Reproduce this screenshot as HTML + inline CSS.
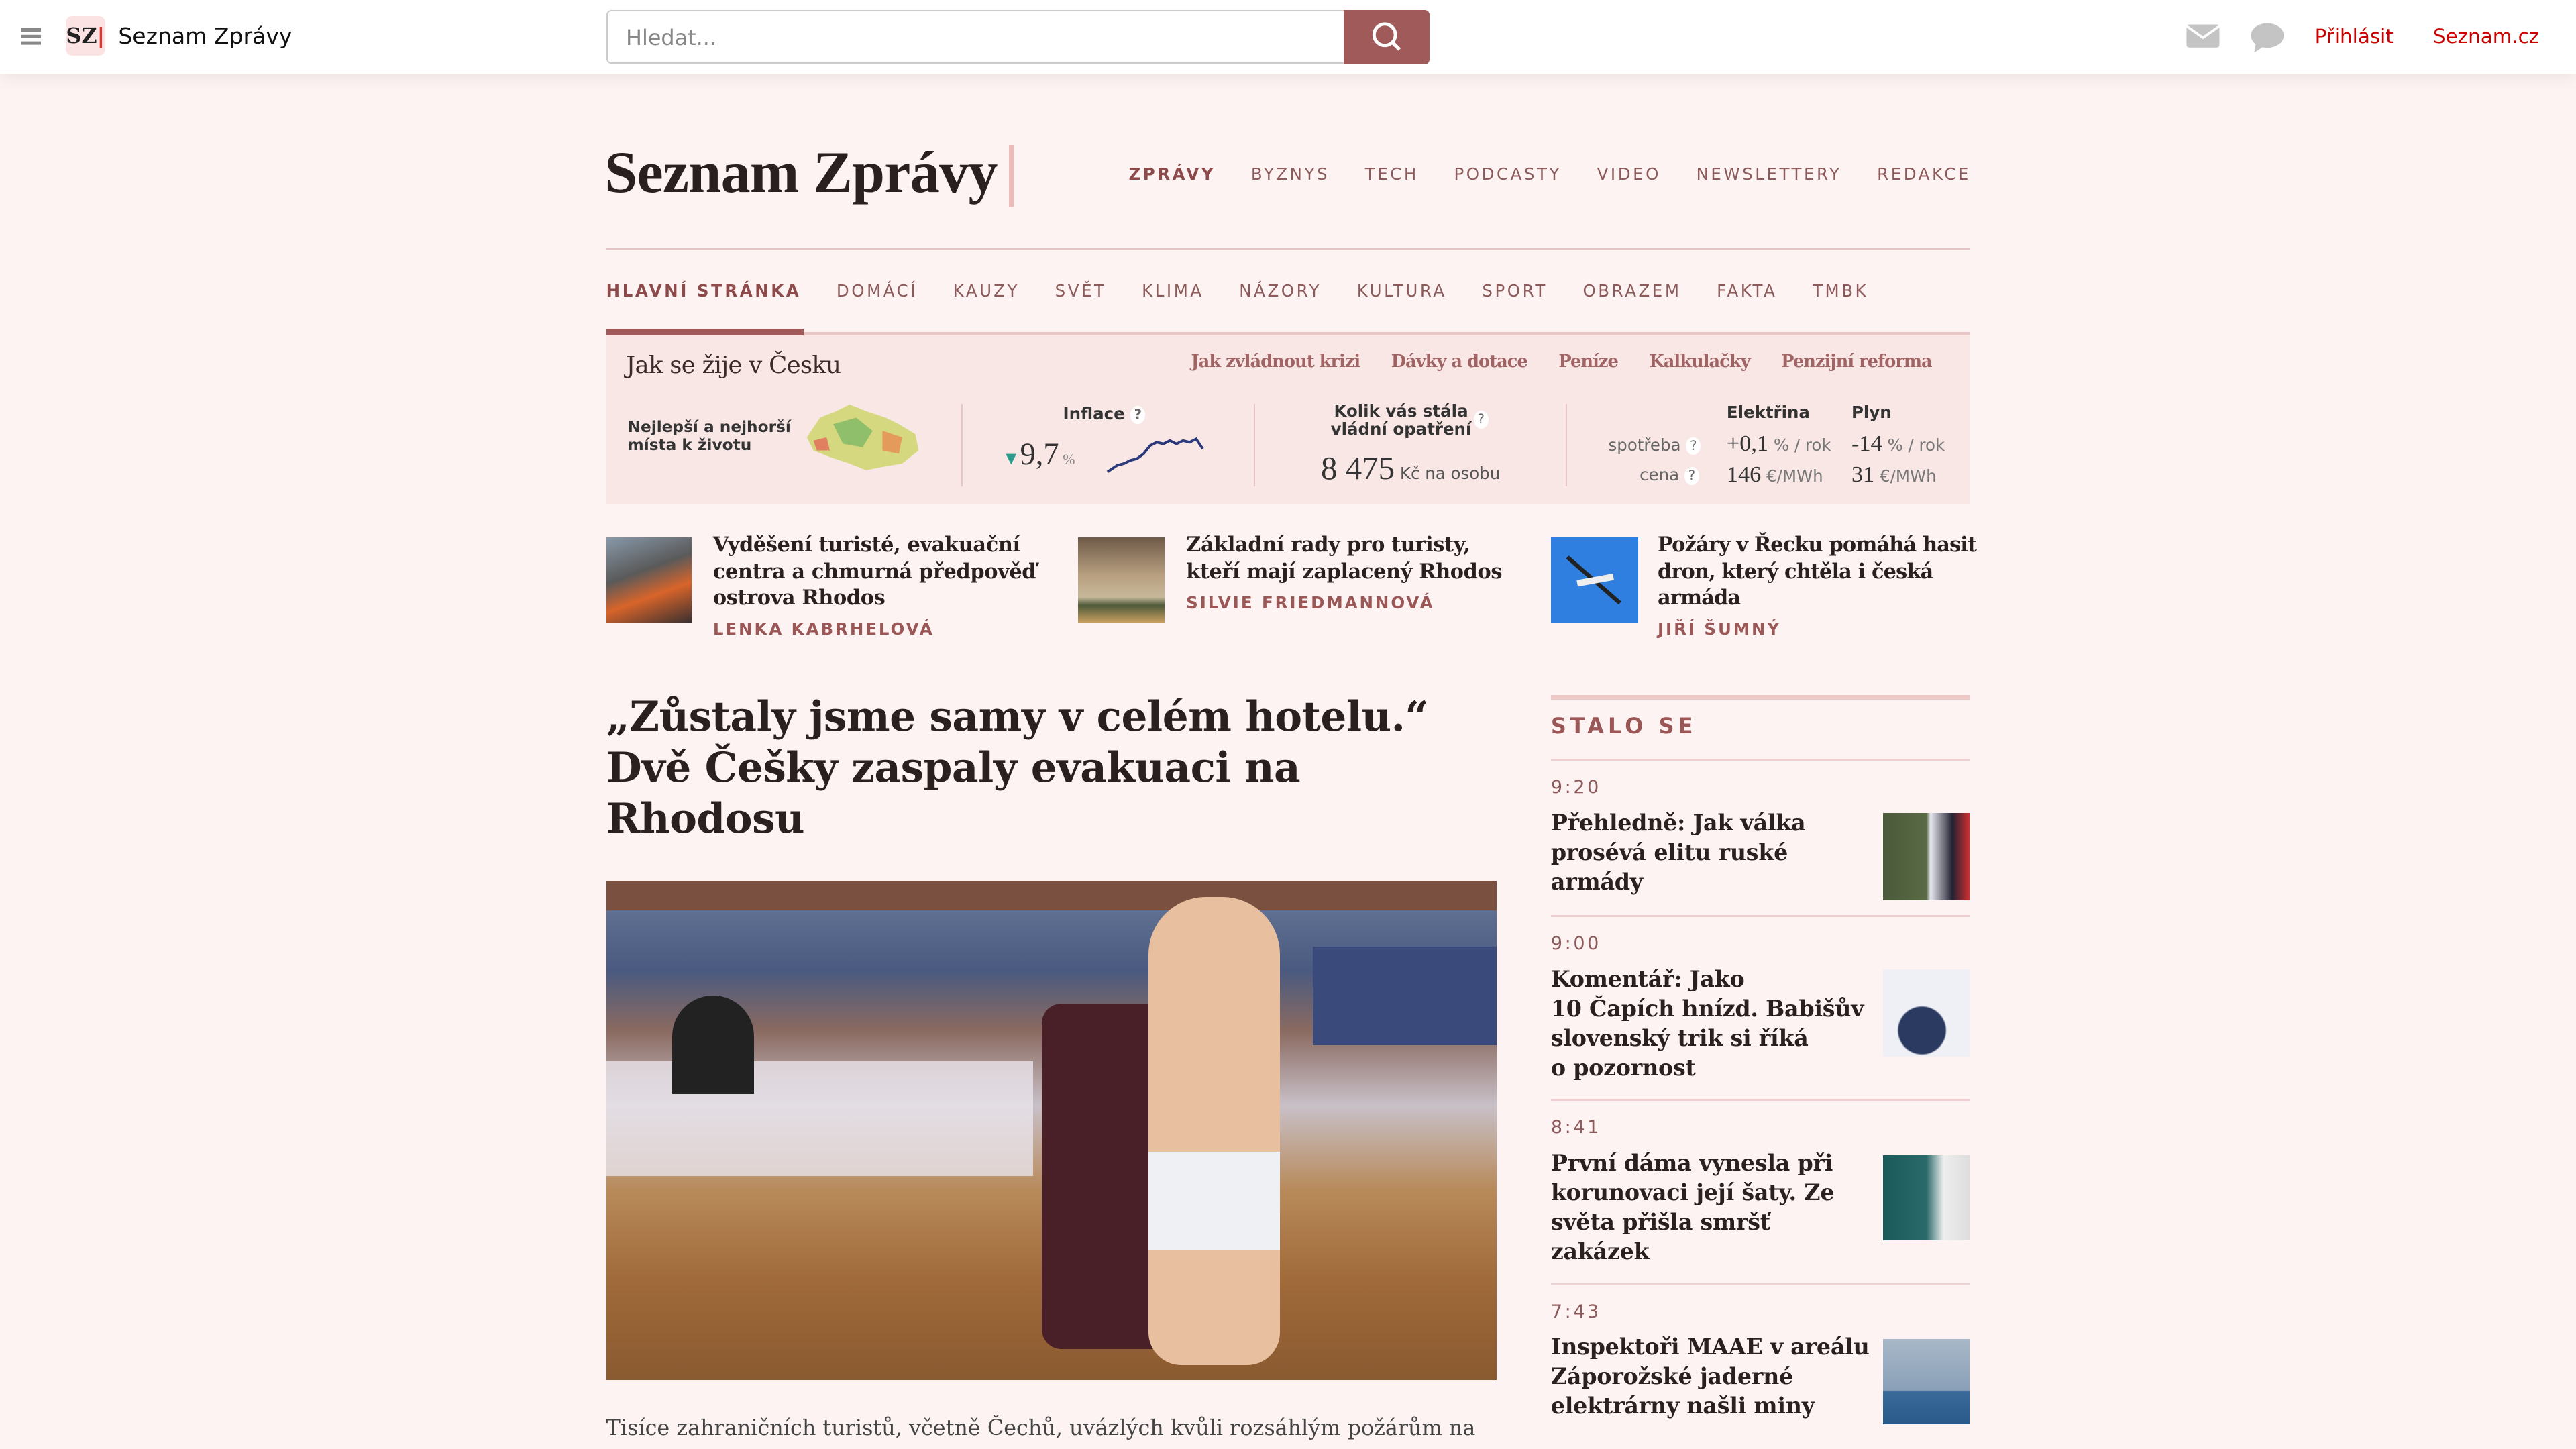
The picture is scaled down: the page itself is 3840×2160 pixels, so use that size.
<!DOCTYPE html>
<html><head><meta charset="utf-8"><style>
html,body{margin:0;padding:0;}
body{width:3840px;height:2160px;overflow:hidden;background:#fdf3f2;}
#p{zoom:2.44898;width:1568px;height:882px;position:relative;font-family:"DejaVu Sans",sans-serif;color:#2b2020;}
.a{position:absolute;}
.hdr{left:0;top:0;width:1568px;height:45px;background:#fff;box-shadow:0 2px 10px rgba(0,0,0,.08);}
.nav{font-size:10px;letter-spacing:1.45px;color:#8c5a5a;white-space:nowrap;}
.ser{font-family:"DejaVu Serif",serif;font-weight:bold;color:#2b2020;}
.hl{font-size:12.4px;line-height:16px;letter-spacing:-.15px;}
.auth{font-size:10px;font-weight:bold;letter-spacing:1.2px;color:#9b5656;}
.sep{background:#efcfcf;height:1px;}
.time{font-size:11px;letter-spacing:1.5px;color:#8c5a5a;}
.rt{font-size:13.6px;line-height:18px;letter-spacing:-.1px;}
.q{display:inline-block;width:9px;height:11px;border-radius:50%;background:#fff;font-size:8px;text-align:center;line-height:11px;color:#666;vertical-align:middle;}
.sm{font-size:10px;color:#333;}
</style></head><body><div id="p">
<div class="a hdr">
  <div class="a" style="left:13px;top:17px;width:12px;height:2px;background:#888;box-shadow:0 4px 0 #888,0 8px 0 #888"></div>
  <div class="a" style="left:40px;top:10px;width:24px;height:24px;border-radius:4px;background:#fbe3e3;font:bold 13px 'DejaVu Serif',serif;line-height:24px;text-align:center;color:#222">SZ<span style="color:#d33">|</span></div>
  <div class="a" style="left:72px;top:14px;font-size:13.5px;color:#111">Seznam Zprávy</div>
  <div class="a" style="left:369px;top:6px;width:448px;height:31px;border:1px solid #ccc;border-radius:3px 0 0 3px;background:#fff"></div>
  <div class="a" style="left:381px;top:15px;font-size:13px;color:#888">Hledat...</div>
  <div class="a" style="left:818px;top:6px;width:52px;height:33px;background:#a05a5a;border-radius:0 3px 3px 0">
    <svg width="52" height="33"><circle cx="25" cy="15" r="6.5" fill="none" stroke="#fff" stroke-width="2"/><path d="M29.5 19.5 L34 24" stroke="#fff" stroke-width="2.2"/></svg></div>
  <svg class="a" style="left:1330px;top:14px" width="22" height="16"><rect x="1" y="1" width="20" height="14" rx="1.5" fill="#c4c4c4"/><path d="M1 2 L11 9 L21 2" stroke="#fff" stroke-width="1.5" fill="none"/></svg>
  <svg class="a" style="left:1369px;top:13px" width="22" height="20"><ellipse cx="11" cy="8.5" rx="10" ry="7.5" fill="#c4c4c4"/><path d="M4 13 L3 19 L9 15Z" fill="#c4c4c4"/></svg>
  <div class="a" style="left:1409px;top:15px;font-size:12px;color:#c00">Přihlásit</div>
  <div class="a" style="left:1481px;top:15px;font-size:12px;color:#c00">Seznam.cz</div>
</div>

<div class="a" style="left:368px;top:84px;font:bold 36px 'Liberation Serif',serif;color:#2b2020;letter-spacing:-.3px">Seznam Zprávy</div>
<div class="a" style="left:614px;top:88px;width:3px;height:38px;background:#efbcbc"></div>
<div class="a nav" style="left:687px;top:100px"><b style="color:#8c4a4a">ZPRÁVY</b><span style="margin-left:21.5px">BYZNYS</span><span style="margin-left:21.5px">TECH</span><span style="margin-left:21.5px">PODCASTY</span><span style="margin-left:21.5px">VIDEO</span><span style="margin-left:21.5px">NEWSLETTERY</span><span style="margin-left:21.5px">REDAKCE</span></div>
<div class="a" style="left:369px;top:151px;width:830px;height:1px;background:#e6c3c3"></div>
<div class="a nav" style="left:369px;top:171px"><b style="color:#8c4a4a">HLAVNÍ STRÁNKA</b><span style="margin-left:21.5px">DOMÁCÍ</span><span style="margin-left:21.5px">KAUZY</span><span style="margin-left:21.5px">SVĚT</span><span style="margin-left:21.5px">KLIMA</span><span style="margin-left:21.5px">NÁZORY</span><span style="margin-left:21.5px">KULTURA</span><span style="margin-left:21.5px">SPORT</span><span style="margin-left:21.5px">OBRAZEM</span><span style="margin-left:21.5px">FAKTA</span><span style="margin-left:21.5px">TMBK</span></div>
<div class="a" style="left:369px;top:202px;width:830px;height:2px;background:#e9c6c6"></div>
<div class="a" style="left:369px;top:200px;width:120px;height:4px;background:#a05a5a"></div>

<div class="a" style="left:369px;top:204px;width:830px;height:103px;background:#f9e7e6"></div>
<div class="a" style="left:381px;top:214px;font:14.5px 'DejaVu Serif',serif;color:#3a2a2a;letter-spacing:-.3px">Jak se žije v Česku</div>
<div class="a" style="left:725px;top:214px;font:bold 10.5px 'DejaVu Serif',serif;color:#a06464;letter-spacing:-.4px;white-space:nowrap">Jak zvládnout krizi<span style="margin-left:19px">Dávky a dotace</span><span style="margin-left:19px">Peníze</span><span style="margin-left:19px">Kalkulačky</span><span style="margin-left:19px">Penzijní reforma</span></div>
<div class="a" style="left:382px;top:255px;font-size:9.5px;font-weight:bold;line-height:11px;color:#333">Nejlepší a nejhorší<br>místa k životu</div>
<svg class="a" style="left:487px;top:244px" width="74" height="44"><path d="M4 22 L12 10 L22 6 L30 2 L40 6 L52 10 L60 14 L70 20 L72 30 L62 38 L50 40 L40 42 L30 38 L18 34 L8 30Z" fill="#d6d880"/><path d="M20 14 L34 10 L44 18 L38 28 L26 26Z" fill="#8fbf6a"/><path d="M50 18 L62 22 L60 32 L50 30Z" fill="#e39a5a"/><path d="M8 24 L16 22 L18 30 L10 30Z" fill="#e08060"/></svg>
<div class="a" style="left:585px;top:246px;width:1px;height:50px;background:#e9c6c6"></div>
<div class="a" style="left:763px;top:246px;width:1px;height:50px;background:#e9c6c6"></div>
<div class="a" style="left:953px;top:246px;width:1px;height:50px;background:#e9c6c6"></div>
<div class="a sm" style="left:647px;top:246px;font-weight:bold">Inflace <span class="q">?</span></div>
<div class="a" style="left:610px;top:266px;font:19px 'Liberation Serif',serif;color:#333"><span style="color:#2a9d8f;font-size:11px">▼</span>9,7<span style="font-size:9px;color:#888"> %</span></div>
<svg class="a" style="left:672px;top:264px" width="64" height="26"><path d="M2 23 L8 19 L12 18 L16 16 L20 15 L24 12 L28 7 L32 5 L36 6 L40 4 L44 6 L48 4 L52 5 L56 3 L60 9" stroke="#2b3a7a" stroke-width="1.6" fill="none"/></svg>
<div class="a sm" style="left:810px;top:245px;font-weight:bold;line-height:11px;text-align:center">Kolik vás stála<br>vládní opatření</div><span class="a q" style="left:897px;top:250px">?</span>
<div class="a" style="left:804px;top:273px;font:20px 'Liberation Serif',serif;color:#333">8 475<span style="font:10px 'DejaVu Sans';color:#555"> Kč na osobu</span></div>
<div class="a sm" style="left:1051px;top:245px;font-weight:bold">Elektřina</div>
<div class="a sm" style="left:1127px;top:245px;font-weight:bold">Plyn</div>
<div class="a sm" style="left:979px;top:265px;color:#666">spotřeba <span class="q">?</span></div>
<div class="a sm" style="left:998px;top:283px;color:#666">cena <span class="q">?</span></div>
<div class="a" style="left:1051px;top:262px;font:14px 'Liberation Serif',serif;color:#333">+0,1<span style="font:10px 'DejaVu Sans';color:#777"> % / rok</span></div>
<div class="a" style="left:1127px;top:262px;font:14px 'Liberation Serif',serif;color:#333">-14<span style="font:10px 'DejaVu Sans';color:#777"> % / rok</span></div>
<div class="a" style="left:1051px;top:281px;font:14px 'Liberation Serif',serif;color:#333">146<span style="font:10px 'DejaVu Sans';color:#777"> €/MWh</span></div>
<div class="a" style="left:1127px;top:281px;font:14px 'Liberation Serif',serif;color:#333">31<span style="font:10px 'DejaVu Sans';color:#777"> €/MWh</span></div>

<div class="a" style="left:369px;top:327px;width:52px;height:52px;background:linear-gradient(160deg,#8899aa 0%,#5a5a5a 40%,#d8642a 65%,#3a3030 100%)"></div>
<div class="a ser hl" style="left:434px;top:324px;width:205px">Vyděšení turisté, evakuační centra a chmurná předpověď ostrova Rhodos</div>
<div class="a auth" style="left:434px;top:377px">LENKA KABRHELOVÁ</div>
<div class="a" style="left:656px;top:327px;width:53px;height:52px;background:linear-gradient(180deg,#6e5a48 0%,#b8a080 45%,#c7b89a 70%,#4f5a3a 80%,#c9a060 100%)"></div>
<div class="a ser hl" style="left:722px;top:324px;width:205px">Základní rady pro turisty, kteří mají zaplacený Rhodos</div>
<div class="a auth" style="left:722px;top:361px">SILVIE FRIEDMANNOVÁ</div>
<div class="a" style="left:944px;top:327px;width:53px;height:52px;background:#2f7fe0"><svg width="53" height="52"><path d="M10 12 L42 40" stroke="#222" stroke-width="2.5"/><path d="M16 28 L38 24" stroke="#eee" stroke-width="4"/></svg></div>
<div class="a ser hl" style="left:1009px;top:324px;width:200px;letter-spacing:-.35px">Požáry v Řecku pomáhá hasit dron, který chtěla i česká armáda</div>
<div class="a auth" style="left:1009px;top:377px">JIŘÍ ŠUMNÝ</div>

<div class="a ser" style="left:369px;top:421px;width:520px;font-size:25px;line-height:31px;letter-spacing:-.2px">„Zůstaly jsme samy v celém hotelu.“ Dvě Češky zaspaly evakuaci na Rhodosu</div>
<div class="a" style="left:369px;top:536px;width:542px;height:304px;overflow:hidden;background:linear-gradient(180deg,#6a7a9a 0%,#4a5a80 18%,#8a6a60 30%,#c8c0c8 45%,#b88a5a 62%,#a06a3a 80%,#8a5a30 100%)">
  <div class="a" style="left:0;top:0;width:542px;height:18px;background:#7a5040"></div>
  <div class="a" style="left:0;top:110px;width:260px;height:70px;background:#e8e4ea;opacity:.8"></div>
  <div class="a" style="left:40px;top:70px;width:50px;height:60px;border-radius:25px 25px 0 0;background:#222"></div>
  <div class="a" style="left:265px;top:75px;width:95px;height:210px;border-radius:12px;background:#4a2028"></div>
  <div class="a" style="left:330px;top:10px;width:80px;height:285px;border-radius:35px 35px 20px 20px;background:#e8c0a0"></div>
  <div class="a" style="left:330px;top:165px;width:80px;height:60px;background:#eef0f4"></div>
  <div class="a" style="left:430px;top:40px;width:112px;height:60px;background:#3a4a7a"></div>
</div>
<div class="a" style="left:369px;top:861px;font:13px 'DejaVu Serif',serif;color:#444">Tisíce zahraničních turistů, včetně Čechů, uvázlých kvůli rozsáhlým požárům na</div>

<div class="a" style="left:944px;top:423px;width:255px;height:3px;background:#efc8c8"></div>
<div class="a" style="left:944px;top:434px;font-size:13px;font-weight:bold;letter-spacing:2.5px;color:#9b5656">STALO SE</div>
<div class="a sep" style="left:944px;top:462px;width:255px"></div>
<div class="a time" style="left:944px;top:473px">9:20</div>
<div class="a ser rt" style="left:944px;top:492px;width:195px">Přehledně: Jak válka prosévá elitu ruské armády</div>
<div class="a" style="left:1146px;top:495px;width:53px;height:53px;background:linear-gradient(90deg,#4a5a3a 0%,#5a6a45 50%,#e8e8f0 55%,#223 80%,#d03030 100%)"></div>
<div class="a sep" style="left:944px;top:557px;width:255px"></div>
<div class="a time" style="left:944px;top:568px">9:00</div>
<div class="a ser rt" style="left:944px;top:587px;width:200px;white-space:nowrap">Komentář: Jako<br>10&nbsp;Čapích hnízd. Babišův<br>slovenský trik si říká<br>o&nbsp;pozornost</div>
<div class="a" style="left:1146px;top:590px;width:53px;height:53px;background:radial-gradient(circle at 45% 70%,#2a3a60 0 30%,#eef0f6 32%)"></div>
<div class="a sep" style="left:944px;top:669px;width:255px"></div>
<div class="a time" style="left:944px;top:680px">8:41</div>
<div class="a ser rt" style="left:944px;top:699px;width:195px">První dáma vynesla při korunovaci její šaty. Ze světa přišla smršť zakázek</div>
<div class="a" style="left:1146px;top:703px;width:53px;height:52px;background:linear-gradient(90deg,#1a5a5a 0%,#2a6a6a 50%,#eee 70%,#ddd 100%)"></div>
<div class="a sep" style="left:944px;top:781px;width:255px"></div>
<div class="a time" style="left:944px;top:792px">7:43</div>
<div class="a ser rt" style="left:944px;top:811px;width:195px">Inspektoři MAAE v areálu Záporožské jaderné elektrárny našli miny</div>
<div class="a" style="left:1146px;top:815px;width:53px;height:52px;background:linear-gradient(180deg,#a8b8c8 0%,#8aa0b8 60%,#3a6a9a 62%,#2a5a8a 100%)"></div>
</div></body></html>
